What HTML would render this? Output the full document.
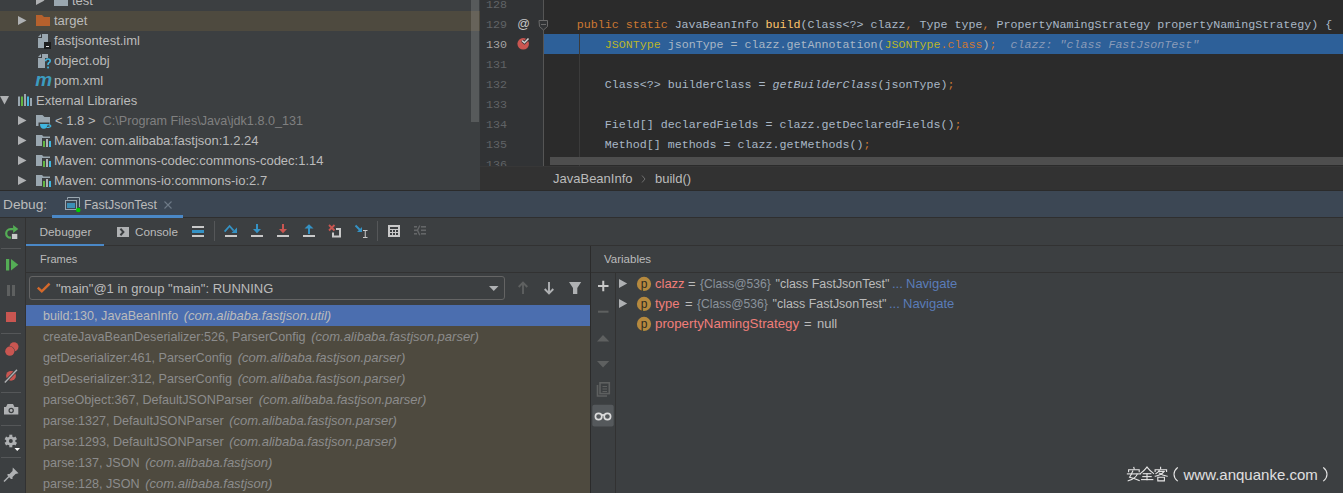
<!DOCTYPE html>
<html><head><meta charset="utf-8">
<style>
*{margin:0;padding:0;box-sizing:border-box}
html,body{width:1343px;height:493px;overflow:hidden;background:#3c3f41;font-family:"Liberation Sans",sans-serif;font-size:13px;color:#bbbbbb}
.a{position:absolute}
.t{position:absolute;white-space:pre;line-height:20px;height:20px}
.m{font-family:"Liberation Mono",monospace;font-size:11.667px}
svg{position:absolute;overflow:visible}
.kw{color:#cc7832}.an{color:#bbb529}.fn{color:#ffc66d}.df{color:#a9b7c6}
.it{font-style:italic}
</style></head><body>

<!-- ===== PROJECT TREE ===== -->
<div class="a" id="proj" style="left:0;top:0;width:480px;height:190px;background:#3c3f41">
  <div class="a" style="left:0;top:11px;width:480px;height:20px;background:#4e4a3f"></div>
  <div class="a" style="left:471px;top:0;width:8px;height:122px;background:rgba(255,255,255,0.14)"></div>

  <!-- tree icons -->
  <svg style="left:0;top:0" width="480" height="190">
    <g fill="#afb1b3">
      <path d="M36 -4 L44.5 0.5 L36 5 Z"/>
      <path d="M18 16 L26.5 20.5 L18 25 Z"/>
      <path d="M0 96 L9 96 L4.5 104.5 Z"/>
      <path d="M18 116 L26.5 120.5 L18 125 Z"/>
      <path d="M18 136 L26.5 140.5 L18 145 Z"/>
      <path d="M18 156 L26.5 160.5 L18 165 Z"/>
      <path d="M18 176 L26.5 180.5 L18 185 Z"/>
    </g>
    <!-- test folder -->
    <path d="M54 -5 H60 L62 -3 H68 V6 H54 Z" fill="#9aa7b0"/>
    <!-- target folder (orange) -->
    <path d="M36 15 H42 L44 17 H50 V26 H36 Z" fill="#b6612d"/>
    <!-- iml file -->
    <path d="M42 34 H48 V48 H38 V38 H42 Z" fill="#9aa7b0"/>
    <path d="M38 37 L41 34 V37 Z" fill="#9aa7b0"/>
    <rect x="44" y="42" width="7" height="7" fill="#1e1e1e"/>
    <rect x="46" y="46" width="3" height="1" fill="#e0e0e0"/>
    <!-- obj file -->
    <path d="M42 54 H48 V68 H38 V58 H42 Z" fill="#9aa7b0"/><path d="M38 57 L41 54 V57 Z" fill="#9aa7b0"/>
    <path d="M45 58 H52 V70 H45 Z" fill="#3c3f41"/>
    <path d="M45.6 61.2 Q45.8 59 48 59 Q50.2 59 50.2 61 Q50.2 62.3 48.6 63 Q48 63.4 48 65" fill="none" stroke="#40b6e0" stroke-width="1.6"/>
    <rect x="47.2" y="66.6" width="1.7" height="1.8" fill="#40b6e0"/>
    <!-- pom m -->
    <text x="35.3" y="86" font-family="Liberation Sans" font-style="italic" font-weight="bold" font-size="19" fill="#3c9cc0">m</text>
    <!-- external libraries bars -->
    <rect x="18" y="96.5" width="2" height="9.5" fill="#9aa7b0"/>
    <rect x="21" y="96.5" width="2" height="9.5" fill="#62b543"/>
    <rect x="24" y="94" width="2" height="12" fill="#9aa7b0"/>
    <rect x="27" y="96.5" width="2" height="9.5" fill="#40b6e0"/>
    <rect x="30" y="98" width="2" height="8" fill="#9aa7b0"/>
    <!-- jdk folder -->
    <path d="M36 115 H42.5 L44.5 117 H50 V126 H36 Z" fill="#9aa7b0"/>
    <path d="M38.5 122.5 H49.5 V129.5 H38.5 Z" fill="#3c3f41"/>
    <path d="M40 124 H47.5 Q47.5 128.8 43.8 128.8 Q40 128.8 40 124 Z" fill="#40b6e0"/>
    <path d="M47 124.8 Q51 124.5 50.8 126.2 Q50.5 127.6 46.5 127.5" fill="none" stroke="#40b6e0" stroke-width="1.2"/>

    <g transform="translate(0 0)">
    <path d="M36 135 H42 L43.5 136.5 H50 V146 H36 Z" fill="#9aa7b0"/>
    <rect x="42" y="138" width="10" height="10" fill="#3c3f41"/>
    <rect x="43" y="141" width="2" height="6" fill="#62b543"/>
    <rect x="46" y="139" width="2" height="8" fill="#afb1b3"/>
    <rect x="49" y="141" width="2" height="6" fill="#40b6e0"/>
    </g>

    <g transform="translate(0 20)">
    <path d="M36 135 H42 L43.5 136.5 H50 V146 H36 Z" fill="#9aa7b0"/>
    <rect x="42" y="138" width="10" height="10" fill="#3c3f41"/>
    <rect x="43" y="141" width="2" height="6" fill="#62b543"/>
    <rect x="46" y="139" width="2" height="8" fill="#afb1b3"/>
    <rect x="49" y="141" width="2" height="6" fill="#40b6e0"/>
    </g>

    <g transform="translate(0 40)">
    <path d="M36 135 H42 L43.5 136.5 H50 V146 H36 Z" fill="#9aa7b0"/>
    <rect x="42" y="138" width="10" height="10" fill="#3c3f41"/>
    <rect x="43" y="141" width="2" height="6" fill="#62b543"/>
    <rect x="46" y="139" width="2" height="8" fill="#afb1b3"/>
    <rect x="49" y="141" width="2" height="6" fill="#40b6e0"/>
    </g>
  </svg>
  <!-- rows -->
  <div class="t" style="left:72px;top:-9px;color:#bbbbbb">test</div>
  <div class="t" style="left:54px;top:11px;color:#bbbbbb">target</div>
  <div class="t" style="left:54px;top:31px;color:#bbbbbb">fastjsontest.iml</div>
  <div class="t" style="left:54px;top:51px;color:#bbbbbb">object.obj</div>
  <div class="t" style="left:54px;top:71px;color:#bbbbbb">pom.xml</div>
  <div class="t" style="left:36px;top:91px;color:#bbbbbb">External Libraries</div>
  <div class="t" style="left:55px;top:111px;color:#bbbbbb">&lt; 1.8 &gt;  <span style="color:#808080;font-size:12.6px">C:\Program Files\Java\jdk1.8.0_131</span></div>
  <div class="t" style="left:54px;top:131px;color:#bbbbbb">Maven: com.alibaba:fastjson:1.2.24</div>
  <div class="t" style="left:54px;top:151px;color:#bbbbbb">Maven: commons-codec:commons-codec:1.14</div>
  <div class="t" style="left:54px;top:171px;color:#bbbbbb">Maven: commons-io:commons-io:2.7</div>

</div>

<!-- ===== EDITOR ===== -->
<div class="a" id="ed" style="left:480px;top:0;width:863px;height:166px;background:#2b2b2b">
  <div class="a" style="left:0;top:0;width:63px;height:166px;background:#313335"></div>
  <div class="a" style="left:63px;top:30px;width:1px;height:136px;background:#555555"></div>
  <div class="a" style="left:64px;top:34px;width:799px;height:20px;background:#2d6099"></div>
  <div class="a" style="left:99px;top:34px;width:1px;height:132px;background:#3b3b3b"></div>
  

  <!-- gutter icons -->
  <svg style="left:0;top:0" width="863" height="166">
    <text x="37.3" y="27.6" font-family="Liberation Sans" font-size="12.5" fill="#c8c8c8">@</text>
    <circle cx="43.2" cy="43.8" r="5.8" fill="#c95651"/>
    <path d="M42.2 40.6 L44.4 42.7 L48.5 38.4" fill="none" stroke="#313335" stroke-width="3"/>
    <path d="M42.2 40.6 L44.4 42.7 L48.5 38.4" fill="none" stroke="#d0d0d0" stroke-width="1.5"/>
    <path d="M63.5 0 V20.5" stroke="#555" stroke-width="1"/>
    <path d="M59 20.5 H67.5 V26.5 L63.5 30 L59.5 26.5 Z" fill="#313335" stroke="#6a6a6a" stroke-width="1"/>
    <path d="M61 24.5 H66" stroke="#6a6a6a" stroke-width="1"/>
  </svg>
  <!-- line numbers -->
  <div class="t m" style="left:6px;top:-5px;color:#606366">128</div>
  <div class="t m" style="left:6px;top:15px;color:#606366">129</div>
  <div class="t m" style="left:6px;top:35px;color:#a4a3a3">130</div>
  <div class="t m" style="left:6px;top:55px;color:#606366">131</div>
  <div class="t m" style="left:6px;top:75px;color:#606366">132</div>
  <div class="t m" style="left:6px;top:95px;color:#606366">133</div>
  <div class="t m" style="left:6px;top:115px;color:#606366">134</div>
  <div class="t m" style="left:6px;top:135px;color:#606366">135</div>
  <div class="t m" style="left:6px;top:155px;color:#606366">136</div>
  <!-- code -->
  <div class="t m df" style="left:96.7px;top:15px"><span class="kw">public static </span>JavaBeanInfo <span class="fn">build</span>(Class&lt;?&gt; clazz<span class="kw">, </span>Type type<span class="kw">, </span>PropertyNamingStrategy propertyNamingStrategy) {</div>
  <div class="t m df" style="left:124.7px;top:35px"><span class="an">JSONType</span> jsonType = clazz.getAnnotation(<span class="an">JSONType</span><span class="kw">.class</span>)<span class="kw">;</span>  <span class="it" style="color:#8a9bb8">clazz: "class FastJsonTest"</span></div>
  <div class="t m df" style="left:124.7px;top:75px">Class&lt;?&gt; builderClass = <span class="it">getBuilderClass</span>(jsonType)<span class="kw">;</span></div>
  <div class="t m df" style="left:124.7px;top:115px">Field[] declaredFields = clazz.getDeclaredFields()<span class="kw">;</span></div>
  <div class="t m df" style="left:124.7px;top:135px">Method[] methods = clazz.getMethods()<span class="kw">;</span></div>
  <div class="a" style="left:70px;top:157px;width:793px;height:8px;background:#4e4e4e"></div>
</div>

<!-- breadcrumb -->
<div class="a" style="left:480px;top:166px;width:863px;height:24px;background:#323232"></div>
<div class="a" style="left:480px;top:166px;width:863px;height:1px;background:#373737"></div>

<!-- ===== DEBUG HEADER ===== -->
<div class="a" style="left:0;top:190px;width:1343px;height:1px;background:#2b2b2b"></div>
<div class="a" style="left:0;top:191px;width:1343px;height:26px;background:#3c4754"></div>
<div class="a" style="left:0;top:217px;width:1343px;height:1px;background:#2f2f2f"></div>
<div class="a" style="left:52px;top:215px;width:131px;height:3px;background:#4a88c7"></div>

<!-- ===== TOOLBAR / PANELS ===== -->
<div class="a" style="left:0;top:218px;width:1343px;height:275px;background:#3c3f41"></div>
<div class="a" style="left:25px;top:218px;width:1px;height:275px;background:#323232"></div>
<div class="a" style="left:26px;top:245px;width:1317px;height:1px;background:#323232"></div>
<div class="a" style="left:26px;top:244px;width:78px;height:2px;background:#4a88c7"></div>
<div class="a" style="left:26px;top:272px;width:1317px;height:1px;background:#323232"></div>

<!-- frames list -->
<div class="a" style="left:26px;top:305px;width:564px;height:188px;background:#4e4a3f"></div>
<div class="a" style="left:26px;top:305px;width:564px;height:21px;background:#4b6eaf"></div>
<div class="a" style="left:590px;top:246px;width:1px;height:247px;background:#2b2b2b"></div>
<div class="a" style="left:615px;top:273px;width:1px;height:220px;background:#323232"></div>

<!-- breadcrumb text -->
<div class="t" style="left:553px;top:169px;color:#bbbbbb">JavaBeanInfo</div>
<svg style="left:641px;top:175px" width="5" height="8"><path d="M1 0.5 L4 4 L1 7.5" fill="none" stroke="#6e6e6e" stroke-width="1"/></svg>
<div class="t" style="left:655px;top:169px;color:#bbbbbb">build()</div>


<!-- header icons -->
<svg style="left:0;top:191px" width="200" height="27">
  <path d="M67.5 8.5 V6.5 H79.5 V16" fill="none" stroke="#9aa7b0" stroke-width="1"/>
  <rect x="65.5" y="9.5" width="11" height="9" fill="none" stroke="#9aa7b0" stroke-width="1"/>
  <rect x="67" y="12" width="8" height="5" fill="#3d8fb6"/>
  <circle cx="78.3" cy="19" r="2.3" fill="#00d000"/>
  <path d="M164.5 10.5 L171.5 17.5 M171.5 10.5 L164.5 17.5" stroke="#6e7a87" stroke-width="1.1"/>
</svg>
<!-- debug header text -->
<div class="t" style="left:3px;top:195px;color:#bbbbbb;font-size:13.7px">Debug:</div>
<div class="t" style="left:84px;top:195px;color:#bbbbbb;font-size:12.4px">FastJsonTest</div>


<!-- toolbar icons -->
<svg style="left:0;top:218px" width="440" height="27">
  <!-- console icon -->
  <rect x="117" y="9" width="12" height="10" fill="#afb1b3"/>
  <path d="M120.4 10.8 L123.4 14 L120.4 17.2" fill="none" stroke="#3c3f41" stroke-width="2"/>
  <!-- threads -->
  <rect x="192" y="8" width="12" height="2" fill="#c9c9c9"/>
  <rect x="192" y="12" width="12" height="3" fill="#3592c4"/>
  <rect x="192" y="17" width="12" height="2" fill="#c9c9c9"/>
  <!-- separator -->
  <rect x="214" y="3" width="1" height="20" fill="#555759"/>
  <!-- step over -->
  <path d="M224.6 13.6 L229.6 8 L233.6 12.6" fill="none" stroke="#3592c4" stroke-width="1.8"/>
  <path d="M237 9.5 V15 H231.5 Z" fill="#3592c4"/>
  <rect x="225" y="17" width="12" height="2" fill="#c9c9c9"/>
  <!-- step into -->
  <rect x="256" y="6" width="2" height="6" fill="#3592c4"/>
  <path d="M253 11 H261 L257 15.2 Z" fill="#3592c4"/>
  <rect x="251" y="17" width="12" height="2" fill="#c9c9c9"/>
  <!-- force step into -->
  <rect x="282" y="6" width="2" height="6" fill="#c95651"/>
  <path d="M279 11 H287 L283 15.2 Z" fill="#c95651"/>
  <rect x="277" y="17" width="12" height="2" fill="#c9c9c9"/>
  <!-- step out -->
  <path d="M304.5 10.5 L309 6.2 L313.5 10.5 Z" fill="#3592c4"/>
  <rect x="308" y="10" width="2" height="6" fill="#3592c4"/>
  <rect x="303" y="17" width="12" height="2" fill="#c9c9c9"/>
  <!-- drop frame -->
  <path d="M336 11 H340 V18.5 H333 V14.5" fill="none" stroke="#c9c9c9" stroke-width="2"/>
  <path d="M329 7 L334.5 12.5 M334.5 7 L329 12.5" stroke="#c95651" stroke-width="1.8"/>
  <!-- run to cursor -->
  <path d="M355.5 7.5 L360.5 12.5" stroke="#3592c4" stroke-width="1.9"/>
  <path d="M362 9 V14 H357 Z" fill="#3592c4"/>
  <path d="M363 12.5 H367.5 M363 19.5 H367.5 M365.25 12.5 V19.5" fill="none" stroke="#c9c9c9" stroke-width="1"/>
  <!-- separator -->
  <rect x="377" y="3" width="1" height="20" fill="#555759"/>
  <!-- calculator -->
  <rect x="388" y="7" width="12" height="12" fill="#c9c9c9"/>
  <rect x="390" y="9" width="8" height="2" fill="#3c3f41"/>
  <g fill="#3c3f41">
   <rect x="390" y="12" width="2" height="2"/><rect x="393" y="12" width="2" height="2"/><rect x="396" y="12" width="2" height="2"/>
   <rect x="390" y="15" width="2" height="2"/><rect x="393" y="15" width="2" height="2"/><rect x="396" y="15" width="2" height="2"/>
  </g>
  <!-- trace (disabled) -->
  <g fill="#646668">
   <rect x="414" y="8" width="3" height="1.6"/><rect x="414" y="11.5" width="4" height="1.6"/><rect x="414" y="15" width="3" height="1.6"/>
   <rect x="421" y="8" width="5" height="1.6"/><rect x="421" y="11.5" width="5" height="1.6"/><rect x="421" y="15" width="5" height="1.6"/>
   <path d="M419.8 7.5 L417.5 12.3 L419.8 17.2" fill="none" stroke="#646668" stroke-width="1.4"/>
  </g>
</svg>
<!-- toolbar text -->
<div class="t" style="left:39.5px;top:222px;color:#bbbbbb;font-size:11.8px">Debugger</div>
<div class="t" style="left:135px;top:222px;color:#bbbbbb;font-size:11.7px">Console</div>


<!-- left column icons -->
<svg style="left:0;top:218px" width="25" height="275">
  <!-- rerun -->
  <path d="M13.5 11.2 H10.4 A4.2 4.2 0 0 0 10.4 19.6 H11" fill="none" stroke="#54ad55" stroke-width="2.2"/>
  <path d="M13.1 6.9 L18.3 11 L13.1 14.9 Z" fill="#54ad55"/>
  <rect x="11.9" y="15.9" width="5.4" height="5.1" fill="#c9c9c9"/>
  <rect x="1" y="30" width="20" height="1" fill="#555759"/>
  <!-- resume -->
  <rect x="6" y="41" width="3.2" height="11.5" fill="#54ad55"/>
  <path d="M11 41 L18.3 46.8 L11 52.5 Z" fill="#54ad55"/>
  <!-- pause -->
  <rect x="7" y="67" width="3" height="11" fill="#5e6060"/>
  <rect x="12" y="67" width="3" height="11" fill="#5e6060"/>
  <!-- stop -->
  <rect x="6" y="94" width="10" height="10" fill="#c95651"/>
  <rect x="1" y="115" width="20" height="1" fill="#555759"/>
  <!-- view breakpoints -->
  <circle cx="14" cy="128.8" r="4.5" fill="#c95651"/>
  <circle cx="9.8" cy="133.2" r="5" fill="#3c3f41"/>
  <circle cx="9.8" cy="133.2" r="4.6" fill="#c95651"/>
  <!-- mute breakpoints -->
  <circle cx="11" cy="157.8" r="4.9" fill="#c95651"/>
  <path d="M4.8 164.4 L17 151.8" stroke="#3c3f41" stroke-width="3"/>
  <path d="M4.8 164.4 L17 151.8" stroke="#afb1b3" stroke-width="1.4"/>
  <rect x="1" y="174" width="20" height="1" fill="#555759"/>
  <!-- camera -->
  <path d="M4 189 H18.3 V196.6 H4 Z M7.5 186 H13 L14.5 189 H6 Z" fill="#afb1b3"/>
  <circle cx="11.2" cy="192.5" r="2.7" fill="#3c3f41"/>
  <circle cx="11.2" cy="192.5" r="1.4" fill="#afb1b3"/>
  <rect x="1" y="207" width="20" height="1" fill="#555759"/>
  <!-- gear -->
  <g transform="translate(10.8 223)">
    <circle r="4.6" fill="#afb1b3"/>
    <g fill="#afb1b3">
      <rect x="-1.5" y="-6.3" width="3" height="12.6"/>
      <rect x="-1.5" y="-6.3" width="3" height="12.6" transform="rotate(60)"/>
      <rect x="-1.5" y="-6.3" width="3" height="12.6" transform="rotate(120)"/>
    </g>
    <circle r="2" fill="#3c3f41"/>
  </g>
  <path d="M14.5 230 H20 L17.25 233 Z" fill="#ffffff"/>
  <rect x="1" y="239" width="20" height="1" fill="#555759"/>
  <!-- pin -->
  <path d="M12.8 249.5 L18.5 255.2 L15.5 256 L12.5 259 L12.5 261 L11 261 L7.5 257.5 L7.5 256 L9.5 256 L12.5 253 Z" fill="#afb1b3"/>
  <path d="M4 263.5 L9.5 258" stroke="#afb1b3" stroke-width="1.5"/>
</svg>
<!-- frames header -->
<div class="t" style="left:40px;top:249px;color:#bbbbbb;font-size:11px">Frames</div>
<div class="a" style="left:29px;top:276px;width:476px;height:24px;border:1px solid #646464;border-radius:3px"></div>
<div class="t" style="left:56px;top:279px;color:#bbbbbb">"main"@1 in group "main": RUNNING</div>


<!-- frames icons -->
<svg style="left:0;top:0" width="1343" height="493">
  <path d="M37.8 287.6 L41.8 291.4 L49.6 283.6" fill="none" stroke="#d4692b" stroke-width="2.4"/>
  <path d="M489 286 H498.5 L493.75 291 Z" fill="#afb1b3"/>
  <!-- up arrow disabled -->
  <path d="M523 282.5 V294 M518.7 287 L523 282.7 L527.3 287" fill="none" stroke="#5e6060" stroke-width="1.9"/>
  <!-- down arrow -->
  <path d="M549 282 V293.5 M544.7 289 L549 293.3 L553.3 289" fill="none" stroke="#afb1b3" stroke-width="1.9"/>
  <!-- filter -->
  <path d="M569 282 H581.2 L577.3 288 V294 H573 V288 Z" fill="#afb1b3"/>
  <!-- variables toolbar -->
  <path d="M598 286 H608.5 M603.25 280.8 V291.2" stroke="#c9c9c9" stroke-width="2"/>
  <path d="M598 311.7 H608.5" stroke="#5e6060" stroke-width="2"/>
  <path d="M597 341.4 L603 335 L609.3 341.4 Z" fill="#5e6060"/>
  <path d="M597 361 L603 367.4 L609.3 361 Z" fill="#5e6060"/>
  <path d="M597.5 385 V396 H607" fill="none" stroke="#5e6060" stroke-width="1.6"/>
  <rect x="600" y="382.8" width="9.3" height="10.8" fill="none" stroke="#5e6060" stroke-width="1.6"/>
  <path d="M602.5 386.5 H607 M602.5 389 H607 M602.5 391.5 H607" stroke="#5e6060" stroke-width="1"/>
  <rect x="592.3" y="404.7" width="21.4" height="21.9" rx="2" fill="#55595c"/>
  <g fill="none" stroke="#dcdcdc" stroke-width="1.7">
    <circle cx="598.6" cy="416.5" r="3.2"/>
    <circle cx="607.4" cy="416.5" r="3.2"/>
    <path d="M601.8 415.3 Q603 414.3 604.2 415.3"/>
  </g>
</svg>
<!-- frames list -->
<div class="t" style="left:43px;top:306px;color:#bbbbbb"><span style="font-size:12.6px">build:130, JavaBeanInfo</span> <span class="it" style="margin-left:2px">(com.alibaba.fastjson.util)</span></div>
<div class="t" style="left:43px;top:327px;color:#8c8c8c"><span style="font-size:12.6px">createJavaBeanDeserializer:526, ParserConfig</span> <span class="it" style="margin-left:2px">(com.alibaba.fastjson.parser)</span></div>
<div class="t" style="left:43px;top:348px;color:#8c8c8c"><span style="font-size:12.6px">getDeserializer:461, ParserConfig</span> <span class="it" style="margin-left:2px">(com.alibaba.fastjson.parser)</span></div>
<div class="t" style="left:43px;top:369px;color:#8c8c8c"><span style="font-size:12.6px">getDeserializer:312, ParserConfig</span> <span class="it" style="margin-left:2px">(com.alibaba.fastjson.parser)</span></div>
<div class="t" style="left:43px;top:390px;color:#8c8c8c"><span style="font-size:12.6px">parseObject:367, DefaultJSONParser</span> <span class="it" style="margin-left:2px">(com.alibaba.fastjson.parser)</span></div>
<div class="t" style="left:43px;top:411px;color:#8c8c8c"><span style="font-size:12.6px">parse:1327, DefaultJSONParser</span> <span class="it" style="margin-left:2px">(com.alibaba.fastjson.parser)</span></div>
<div class="t" style="left:43px;top:432px;color:#8c8c8c"><span style="font-size:12.6px">parse:1293, DefaultJSONParser</span> <span class="it" style="margin-left:2px">(com.alibaba.fastjson.parser)</span></div>
<div class="t" style="left:43px;top:453px;color:#8c8c8c"><span style="font-size:12.6px">parse:137, JSON</span> <span class="it" style="margin-left:2px">(com.alibaba.fastjson)</span></div>
<div class="t" style="left:43px;top:474px;color:#8c8c8c"><span style="font-size:12.6px">parse:128, JSON</span> <span class="it" style="margin-left:2px">(com.alibaba.fastjson)</span></div>

<!-- variables -->
<div class="t" style="left:604px;top:249px;color:#bbbbbb;font-size:11.5px">Variables</div>
<div class="t" style="left:655px;top:274px;color:#f07e7a">clazz</div>
<div class="t" style="left:688px;top:274px;color:#bbbbbb">=</div>
<div class="t" style="left:700px;top:274px;color:#8a929b;font-size:12.1px">{Class@536}</div>
<div class="t" style="left:775.5px;top:274px;color:#bbbbbb;font-size:12.45px">"class FastJsonTest"</div>
<div class="t" style="left:892px;top:274px;color:#5a7cb8">...</div>
<div class="t" style="left:906px;top:274px;color:#5a7cb8">Navigate</div>
<div class="t" style="left:655px;top:294px;color:#f07e7a">type</div>
<div class="t" style="left:685px;top:294px;color:#bbbbbb">=</div>
<div class="t" style="left:697px;top:294px;color:#8a929b;font-size:12.1px">{Class@536}</div>
<div class="t" style="left:772.5px;top:294px;color:#bbbbbb;font-size:12.45px">"class FastJsonTest"</div>
<div class="t" style="left:889px;top:294px;color:#5a7cb8">...</div>
<div class="t" style="left:903px;top:294px;color:#5a7cb8">Navigate</div>
<div class="t" style="left:655px;top:314px;color:#f07e7a;font-size:13.3px">propertyNamingStrategy</div>
<div class="t" style="left:804px;top:314px;color:#bbbbbb">=</div>
<div class="t" style="left:817px;top:314px;color:#bbbbbb">null</div>

<!-- variable icons -->
<svg style="left:0;top:0" width="1343" height="493">
  <path d="M619 279 L627.2 283.5 L619 288 Z" fill="#afb1b3"/>
  <path d="M619 299 L627.2 303.5 L619 308 Z" fill="#afb1b3"/>
  <g fill="#b5893e"><circle cx="644" cy="283.9" r="7.1"/><circle cx="644" cy="303.9" r="7.1"/><circle cx="644" cy="323.9" r="7.1"/></g>
  <g font-family="Liberation Sans" font-size="12" fill="#2b2a22"><text x="640.8" y="287.8">p</text><text x="640.8" y="307.8">p</text><text x="640.8" y="327.8">p</text></g>
</svg>
<!-- watermark -->

<svg style="left:0;top:0" width="1343" height="493">
 <g fill="none" stroke="#e6e6e6" stroke-width="1.1" stroke-linecap="square">
  <!-- 安 -->
  <path d="M1133.8 467.3 L1134.2 468.8"/>
  <path d="M1128.6 471.8 V469.7 H1139.2 V471.8"/>
  <path d="M1127.4 473.9 H1140.4"/>
  <path d="M1132.8 471 Q1131 475 1129.6 477.3 Q1135 478.5 1139.2 480.6"/>
  <path d="M1137.2 474.2 Q1136 478.6 1128.2 480.8"/>
  <!-- 全 -->
  <path d="M1147 467.2 Q1144 471 1140.6 473.4"/>
  <path d="M1147 467.2 Q1150 471 1153.5 473.4"/>
  <path d="M1143.3 473.7 H1150.8"/>
  <path d="M1142.8 476.6 H1151.2"/>
  <path d="M1141.6 479.6 H1152.8"/>
  <path d="M1147 473.7 V479.6"/>
  <!-- 客 -->
  <path d="M1160.6 467.2 V468.8"/>
  <path d="M1155.1 471.5 V469.7 H1166.6 V471.5"/>
  <path d="M1159.2 470.6 Q1158 472.6 1156 473.6"/>
  <path d="M1158.6 471.4 H1164"/>
  <path d="M1164 471.6 Q1161 475 1155.2 476.2"/>
  <path d="M1159.4 473.2 Q1162 475.5 1167.2 476.2"/>
  <path d="M1157.8 480.9 V477.2 H1164.4 V480.9 H1157.8"/>
  <!-- parens -->
  <path d="M1177.4 467.8 Q1174 470.5 1174 474.2 Q1174 478 1177.4 480.8"/>
  <path d="M1323.6 467.8 Q1327 470.5 1327 474.2 Q1327 478 1323.6 480.8"/>
 </g>
</svg>
<div class="t" style="left:1183.5px;top:465px;color:#e0e0e0;font-size:15px">www.anquanke.com</div>

</body></html>
